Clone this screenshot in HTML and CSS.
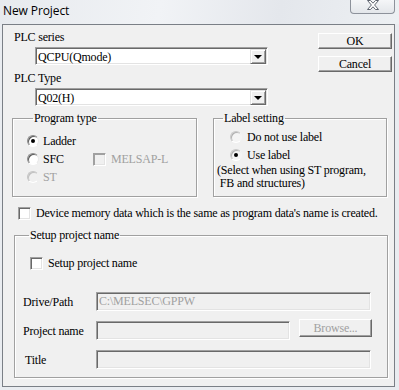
FILE: index.html
```html
<!DOCTYPE html>
<html lang="en">
    <head>
        <meta name="viewport" content="width=device-width, initial-scale=1.0">
        <title>New Project</title>
        <link rel="stylesheet" href="styles.css">
    </head>
    <body>
        <div class="titlebar">
            <span class="caption">New Project</span>
            <div class="close">
                <svg width="14" height="11" viewBox="0 0 14 11">
                    <path d="M1.5 0.5 H4.5 L7 3.2 L9.5 0.5 H12.5 L8.6 5 L12.5 9.5 H9.5 L7 6.8 L4.5 9.5 H1.5 L5.4 5 Z" fill="#fff" stroke="#5f6570" stroke-width="1" stroke-linejoin="round"/>
                </svg>
            </div>
        </div>
        <div class="frame">
            <div class="top">
                <div class="left">
                    <div class="lbl lbl-series">PLC series</div>
                    <div class="combo">
                        <span>QCPU(Qmode)</span>
                        <span class="drop"><i></i></span>
                    </div>
                    <div class="lbl lbl-type">PLC Type</div>
                    <div class="combo">
                        <span>Q02(H)</span>
                        <span class="drop"><i></i></span>
                    </div>
                </div>
                <div class="buttons">
                    <button type="button" class="btn">OK</button>
                    <button type="button" class="btn">Cancel</button>
                </div>
            </div>

            <div class="groups">
                <fieldset class="group program">
                    <legend>Program type</legend>
                    <div class="prog-grid">
                        <div class="opt"><span class="radio checked"></span>Ladder</div>
                        <div></div>
                        <div class="opt"><span class="radio"></span>SFC</div>
                        <div class="opt disabled"><span class="check"></span>MELSAP-L</div>
                        <div class="opt disabled"><span class="radio"></span>ST</div>
                    </div>
                </fieldset>
                <fieldset class="group label-set">
                    <legend>Label setting</legend>
                    <div class="opt"><span class="radio light"></span>Do not use label</div>
                    <div class="opt"><span class="radio light checked"></span>Use label</div>
                    <div class="note">(Select when using ST program,</div>
                    <div class="note">&nbsp;FB and structures)</div>
                </fieldset>
            </div>

            <div class="opt device"><span class="check"></span>Device memory data which is the same as program data's name is created.</div>

            <fieldset class="group setup">
                <legend>Setup project name</legend>
                <div class="opt setup-check"><span class="check"></span>Setup project name</div>
                <div class="field-row first">
                    <span class="flbl">Drive/Path</span>
                    <div class="field wide">C:\MELSEC\GPPW</div>
                </div>
                <div class="field-row">
                    <span class="flbl">Project name</span>
                    <div class="field short"></div>
                    <button type="button" class="btn browse">Browse...</button>
                </div>
                <div class="field-row">
                    <span class="flbl title-lbl">Title</span>
                    <div class="field wide"></div>
                </div>
            </fieldset>
        </div>
    </body>
</html>
```
FILE: styles.css
```css
* {
    box-sizing: border-box;
}

body {
    margin: 0;
    width: 399px;
    height: 390px;
    overflow: hidden;
    background: #e9ecf0;
    font-family: "Liberation Serif", serif;
    font-size: 12px;
    line-height: 14px;
    letter-spacing: -0.2px;
    color: #000;
}

.titlebar {
    display: flex;
    height: 24px;
    background: linear-gradient(100deg, #e7eaee 0%, #f1f3f6 40%, #e4e7ec 70%, #edf0f3 100%);
}

.caption {
    font-family: "Open Sans", sans-serif;
    font-size: 12px;
    line-height: 14px;
    padding: 4px 0 0 3px;
    letter-spacing: -0.1px;
}

.close {
    margin-left: auto;
    margin-right: 4px;
    width: 45px;
    height: 15px;
    margin-top: -1px;
    border: 1px solid #8d929b;
    border-top: none;
    border-radius: 0 0 4px 4px;
    background: linear-gradient(#f6f7f9, #e3e6ea);
    display: flex;
    justify-content: center;
    padding-top: 1px;
}

.frame {
    margin-left: 2px;
    width: 393px;
    height: 363px;
    border: 1px solid #7a7f86;
    background: #f0f0f0;
}

/* top area */
.top {
    display: flex;
}

.lbl-series {
    margin: 5px 0 0 11px;
}

.lbl-type {
    margin: 6px 0 0 11px;
}

.combo {
    display: flex;
    align-items: center;
    margin: 3px 0 0 32px;
    width: 233px;
    height: 18px;
    background: #fff;
    border: 1px solid;
    border-color: #a0a0a0 #fff #fff #a0a0a0;
    box-shadow: inset 1px 1px #696969, inset -1px -1px #e3e3e3;
    padding: 1px 2px 0 2px;
}

.combo span:first-child {
    flex: 1;
}

.drop {
    width: 16px;
    height: 15px;
    margin: 0 -1px 0 0;
    background: #f0f0f0;
    border: 1px solid;
    border-color: #e3e3e3 #696969 #696969 #e3e3e3;
    box-shadow: inset 1px 1px #fff, inset -1px -1px #a0a0a0;
    display: flex;
    align-items: center;
    justify-content: center;
}

.drop i {
    width: 0;
    height: 0;
    border-left: 4px solid transparent;
    border-right: 4px solid transparent;
    border-top: 4px solid #000;
}

.buttons {
    margin: 8px 2px 0 auto;
    display: flex;
    flex-direction: column;
    gap: 7px;
}

.btn {
    font-family: "Liberation Serif", serif;
    font-size: 12px;
    line-height: 12px;
    letter-spacing: -0.2px;
    width: 74px;
    height: 16px;
    padding: 0;
    background: #f0f0f0;
    color: #000;
    border: 1px solid;
    border-color: #fff #696969 #696969 #fff;
    box-shadow: inset -1px -1px #a0a0a0;
}

/* group boxes */
.groups {
    display: flex;
    margin: 5px 0 0 9px;
    gap: 16px;
}

.group {
    margin: 0;
    border: 1px solid #a0a0a0;
    box-shadow: 1px 1px #fff, inset 1px 1px #fff;
    padding: 0;
}

.group legend {
    margin-left: 6px;
    padding: 0 1px;
    line-height: 14px;
}

.program {
    width: 185px;
    height: 86px;
    padding: 7px 0 0 14px;
}

.label-set {
    width: 174px;
    height: 86px;
    padding: 5px 0 0 3px;
}

.prog-grid {
    display: grid;
    grid-template-columns: 66px auto;
    grid-auto-rows: 18px;
}

.opt {
    display: flex;
    align-items: center;
    height: 18px;
}

.disabled {
    color: #a0a0a0;
}

.radio {
    width: 12px;
    height: 12px;
    border-radius: 50%;
    margin-right: 4px;
    background: #fff;
    border: 1px solid;
    border-color: #8c8c8c #e8e8e8 #fff #8c8c8c;
    box-shadow: inset 1px 1px #5a5a5a;
    position: relative;
}

.radio.light {
    margin-left: 13px;
    margin-right: 5px;
    background: #f4f4f4;
    box-shadow: inset 1px 1px #b0b0b0;
    border-color: #c8c8c8 #f4f4f4 #fff #c8c8c8;
}

.disabled .radio {
    background: #f0f0f0;
    box-shadow: inset 1px 1px #c0c0c0;
    border-color: #c4c4c4 #f0f0f0 #fff #c4c4c4;
}

.radio.checked::after {
    content: "";
    position: absolute;
    left: 3px;
    top: 3px;
    width: 4px;
    height: 4px;
    border-radius: 50%;
    background: #000;
}

.check {
    width: 13px;
    height: 13px;
    margin-right: 5px;
    background: #fff;
    border: 1px solid;
    border-color: #a0a0a0 #fff #fff #a0a0a0;
    box-shadow: inset 1px 1px #696969, inset -1px -1px #e3e3e3;
}

.disabled .check {
    background: #f0f0f0;
    box-shadow: inset 1px 1px #a0a0a0, inset -1px -1px #e3e3e3;
}

.label-set .opt:first-of-type {
    margin-top: -2px;
}

.note {
    height: 13px;
    line-height: 13px;
}

.device {
    margin: 7px 0 0 15px;
}

/* setup project name */
.setup {
    margin: 6px 0 0 11px;
    width: 374px;
    height: 150px;
    padding: 12px 0 0 8px;
}

.setup-check {
    margin-left: 7px;
}

.field-row {
    display: flex;
    align-items: center;
    height: 19px;
    margin-top: 10px;
}

.field-row.first {
    margin-top: 20px;
}

.flbl {
    width: 73px;
}

.title-lbl {
    padding-left: 2px;
}

.field {
    height: 19px;
    background: #f0f0f0;
    color: #a0a0a0;
    padding: 1px 2px 0 2px;
    border: 1px solid;
    border-color: #a0a0a0 #fff #fff #a0a0a0;
    box-shadow: inset 1px 1px #696969, inset -1px -1px #e3e3e3;
}

.wide {
    width: 275px;
}

.short {
    width: 194px;
}

.browse {
    width: 73px;
    height: 18px;
    margin: -5px 0 0 9px;
    color: #a0a0a0;
}
```
